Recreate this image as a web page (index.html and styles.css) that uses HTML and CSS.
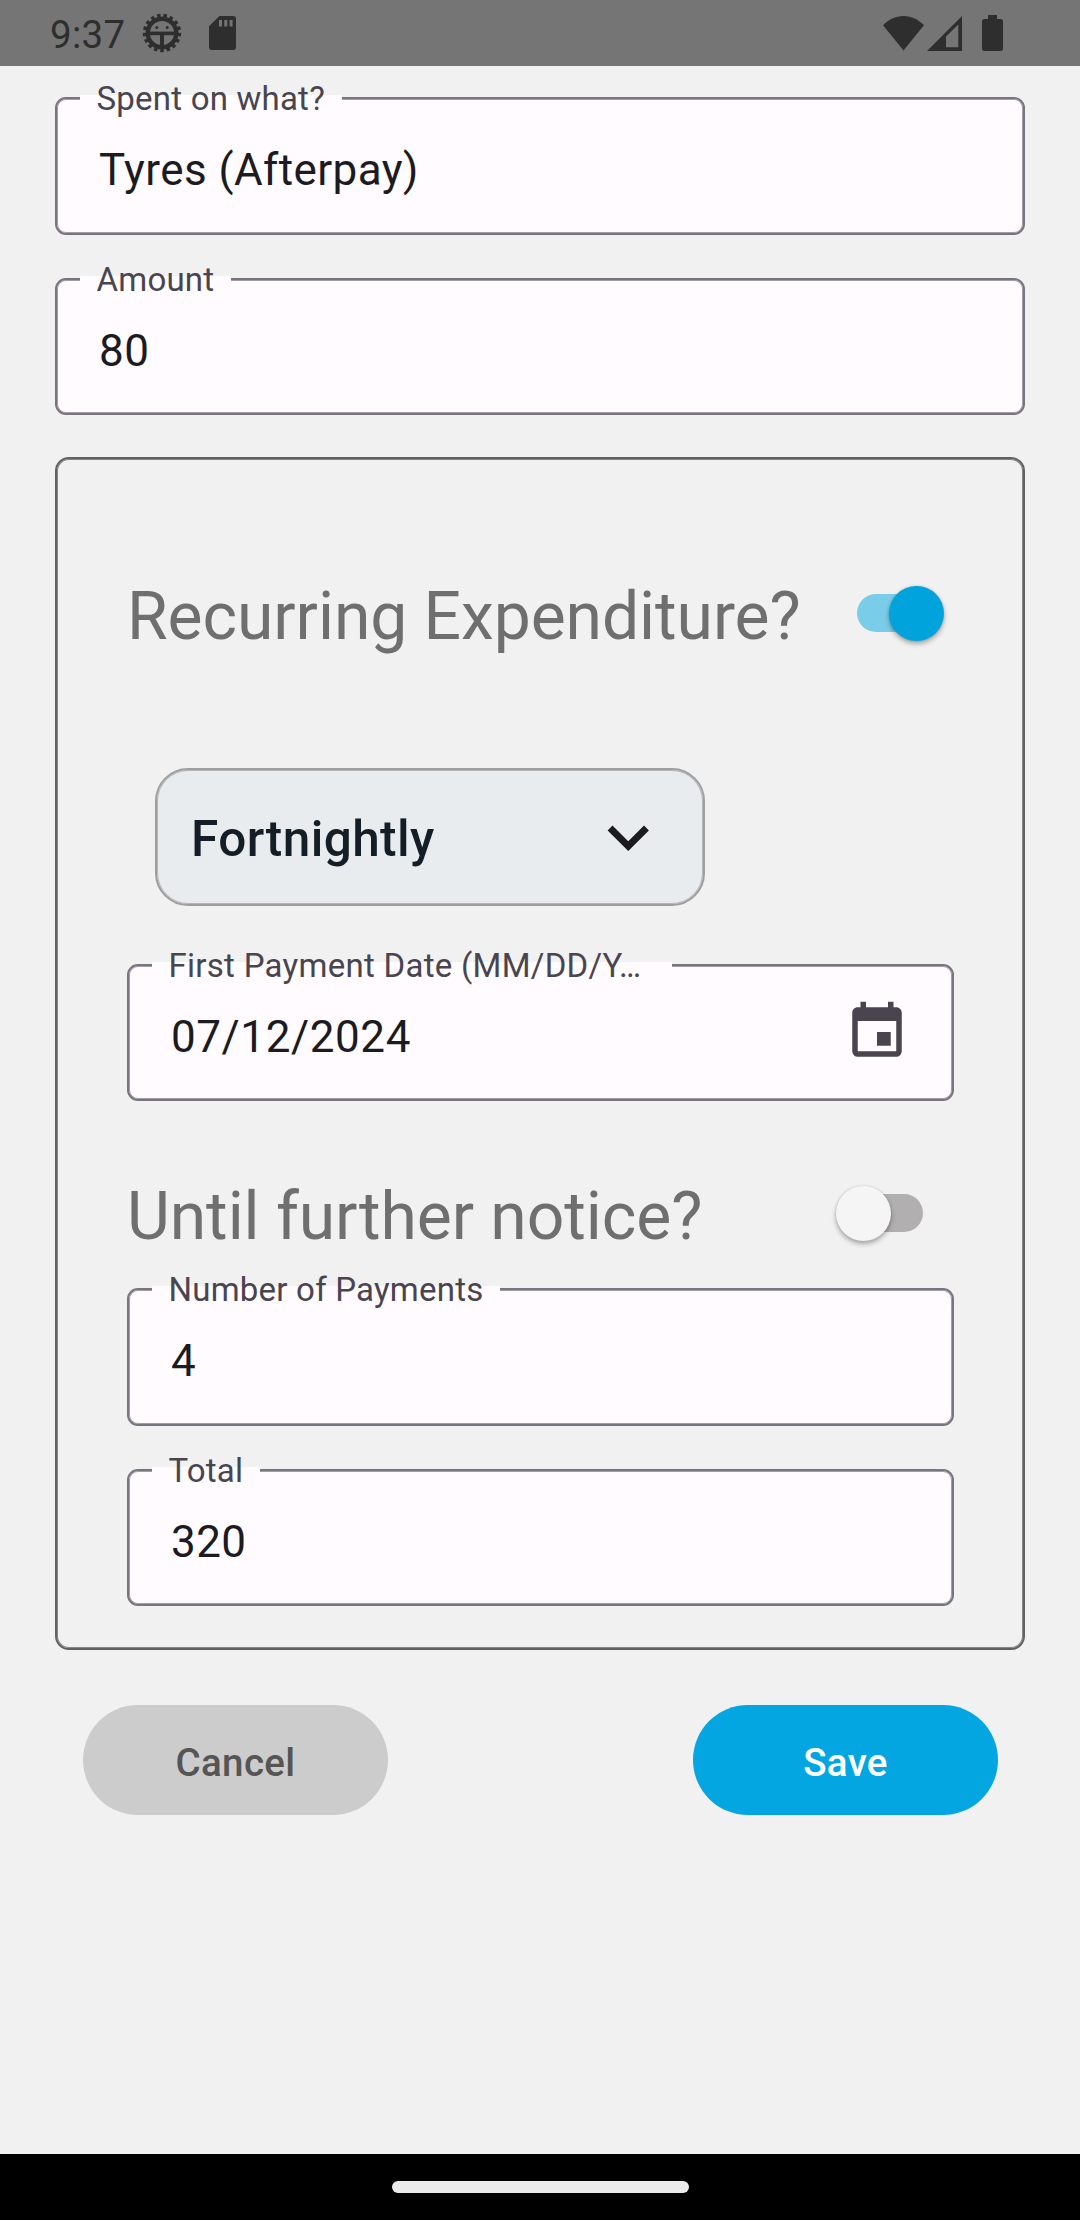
FILE: index.html
```html
<!DOCTYPE html>
<html lang="en">
<head>
<meta charset="utf-8">
<title>Expenditure</title>
<link rel="stylesheet" href="styles.css">
</head>
<body>
<div class="screen">
  <header class="status-bar">
    <span class="clock">9:37</span>
    <svg class="icon-bug" width="40" height="40" viewBox="0 0 40 40">
      <g fill="none" stroke="currentColor">
        <circle cx="20" cy="20" r="14.3" stroke-width="4.400"/>
        <circle cx="20" cy="20" r="17.400" stroke-width="3.600" pathLength="17" stroke-dasharray=".54 .46" stroke-dashoffset=".27" transform="rotate(90 20 20)"/>
        <path d="M6 20.400h28" stroke-width="3.600"/>
        <path d="M20 21v14" stroke-width="4"/>
      </g>
      <circle cx="14.8" cy="14.4" r="1.500" fill="currentColor"/>
      <circle cx="25.2" cy="14.4" r="1.500" fill="currentColor"/>
    </svg>
    <svg class="icon-sd" width="27" height="34" viewBox="0 0 27 34">
      <path fill="currentColor" fill-rule="evenodd" d="M10.500 0H24a3 3 0 0 1 3 3v28a3 3 0 0 1-3 3H3a3 3 0 0 1-3-3V10.300zM10 4v6.500h3V4zM15.300 4v6.500h3V4zM20.600 4v6.500h3V4z"/>
    </svg>
    <span class="spacer"></span>
    <svg width="41" height="35" viewBox="0 0 41 35"><path fill="currentColor" d="M0 9.300C5.500 3.500 12.500 0 20.500 0S35.500 3.500 41 9.300L20.500 34.500z"/></svg>
    <svg class="icon-signal" width="35" height="35" viewBox="0 0 35 35"><path fill="currentColor" fill-rule="evenodd" d="M35 0v35H0zM31.300 8.500L19 20.500v10.800h12.300z"/></svg>
    <svg class="icon-battery" width="21" height="36" viewBox="0 0 21 36"><path fill="currentColor" d="M6 0h9v4h3.500A2.500 2.500 0 0 1 21 6.500v27a2.500 2.500 0 0 1-2.500 2.500h-16A2.500 2.500 0 0 1 0 33.500v-27A2.500 2.500 0 0 1 2.500 4H6z"/></svg>
  </header>

  <main class="content">
    <div class="field field-tall"><span class="label">Spent on what?</span><span class="value">Tyres (Afterpay)</span></div>
    <div class="field field-amount"><span class="label">Amount</span><span class="value">80</span></div>

    <section class="card">
      <div class="row">
        <h2 class="heading">Recurring Expenditure?</h2>
        <span class="switch switch-on"><span class="thumb"></span></span>
      </div>
      <div class="dropdown">
        <span class="dropdown-text">Fortnightly</span>
        <svg width="82.5" height="82.5" viewBox="0 0 24 24"><path fill="#1c1b1f" d="M7.410 8.580L12 13.170l4.590-4.590L18 10l-6 6-6-6z"/></svg>
      </div>
      <div class="field field-date">
        <span class="label label-date">First Payment Date (MM/DD/Y…</span>
        <span class="value value-date">07/12/2024</span>
        <svg class="calendar" width="66" height="66" viewBox="0 0 24 24"><path fill="#49454f" d="M19,19H5V8H19M16,1V3H8V1H6V3H5C3.890,3 3,3.890 3,5V19A2,2 0 0,0 5,21H19A2,2 0 0,0 21,19V5C21,3.890 20.100,3 19,3H18V1M17,12H12V17H17V12Z"/></svg>
      </div>
      <div class="row row-notice">
        <h2 class="heading">Until further notice?</h2>
        <span class="switch switch-off"><span class="thumb"></span></span>
      </div>
      <div class="field field-tall"><span class="label">Number of Payments</span><span class="value">4</span></div>
      <div class="field field-total"><span class="label">Total</span><span class="value">320</span></div>
    </section>

    <div class="actions">
      <button class="button button-cancel">Cancel</button>
      <button class="button button-save">Save</button>
    </div>
  </main>

  <footer class="nav-bar"><span class="handle"></span></footer>
</div>
</body>
</html>
```
FILE: styles.css
```css
* {
  box-sizing: border-box;
}

body {
  margin: 0;
  font-family: Roboto, "Liberation Sans", sans-serif;
  background: #f1f1f1;
}

svg {
  display: block;
  flex: none;
}

.screen {
  display: flex;
  flex-direction: column;
  width: 1080px;
  height: 2220px;
}

.status-bar {
  display: flex;
  align-items: center;
  height: 66px;
  padding: 0 77px 0 50px;
  background: #757575;
  color: #2e2e2e;
}

.clock {
  width: 75px;
  margin-top: 3px;
  font-size: 38.5px;
  line-height: 46px;
  letter-spacing: 0.3px;
}

.icon-bug {
  margin-left: 16.5px;
}

.icon-sd {
  margin-left: 27.5px;
}

.spacer {
  flex: 1;
}

.icon-signal {
  margin-left: 3px;
}

.icon-battery {
  margin-left: 20px;
}

.content {
  flex: 1;
  padding: 31px 55px 0;
}

.field {
  position: relative;
  display: flex;
  justify-content: space-between;
  height: 137px;
  padding: 45px 42px 0;
  border: 2px solid #79747e;
  border-radius: 11px;
  box-shadow: inset 0 0 0 1px #a19ca5;
  background: #fffbff;
}

.field-tall {
  height: 138px;
}

.field-amount,
.field-total {
  margin-top: 43px;
}

.label {
  position: absolute;
  left: 23px;
  top: -19px;
  padding: 0 17px 0 16.5px;
  font-size: 33px;
  line-height: 38px;
  letter-spacing: 0.22px;
  white-space: nowrap;
  color: #49454f;
  background: linear-gradient(#fffbff, #fffbff) 0 15px / 100% 8px no-repeat;
}

.label-date {
  width: 520px;
  letter-spacing: 0.28px;
}

.value {
  font-size: 44px;
  line-height: 52px;
  letter-spacing: 0.41px;
  color: #1c1b1f;
}

.value-date {
  letter-spacing: 0.58px;
}

.card {
  display: flex;
  flex-direction: column;
  height: 1193px;
  margin-top: 42px;
  padding: 118px 69px 0 70px;
  border: 2px solid #616161;
  border-radius: 14px;
  box-shadow: inset 0 0 0 1px #868686;
}

.row {
  display: flex;
  align-items: center;
  justify-content: space-between;
  height: 78px;
}

.row-notice {
  margin: 76px 0 33px;
}

.heading {
  margin: 2px 0 0;
  font-size: 66px;
  font-weight: 400;
  line-height: 78px;
  letter-spacing: -0.07px;
  white-space: nowrap;
  color: #6f6f6f;
}

.switch {
  display: flex;
  align-items: center;
  width: 85px;
  height: 38px;
  margin-bottom: 6px;
  border-radius: 19px;
}

.switch-on {
  justify-content: flex-end;
  margin-right: 12px;
  background: #7acde9;
}

.switch-off {
  margin-right: 31px;
  background: #b2afb0;
}

.thumb {
  flex: none;
  width: 55px;
  height: 55px;
  border-radius: 50%;
  box-shadow: 0 3px 5px rgba(0, 0, 0, 0.3), 0 0 3px rgba(0, 0, 0, 0.12);
}

.switch-on .thumb {
  margin-right: -2px;
  background: #00a3dc;
}

.switch-off .thumb {
  margin-left: -2px;
  background: #f5f5f5;
}

.dropdown {
  display: flex;
  align-items: center;
  justify-content: space-between;
  width: 550px;
  height: 138px;
  margin: 113px 0 0 28px;
  padding: 0 34px;
  border: 2px solid #9e9e9e;
  border-radius: 33px;
  box-shadow: inset 0 0 0 1px #b4b6b8;
  background: #e8ecef;
  color: #151e26;
}

.dropdown-text {
  padding-top: 3px;
  font-size: 49.5px;
  font-weight: 500;
  letter-spacing: 0.41px;
}

.field-date {
  margin-top: 58px;
}

.calendar {
  margin-top: -12px;
}

.actions {
  display: flex;
  justify-content: space-between;
  margin-top: 55px;
  padding: 0 27px 0 28px;
}

.button {
  width: 305px;
  height: 110px;
  padding: 4px 0 0;
  border: 0;
  border-radius: 55px;
  font-family: inherit;
  font-size: 38.5px;
  font-weight: 500;
  letter-spacing: 0.35px;
}

.button-cancel {
  background: #ccc;
  color: #555;
}

.button-save {
  background: #03a6e0;
  color: #fff;
}

.nav-bar {
  display: flex;
  justify-content: center;
  height: 66px;
  padding-top: 27px;
  background: #000;
}

.handle {
  width: 297px;
  height: 12px;
  border-radius: 6px;
  background: #ebebeb;
}
```
